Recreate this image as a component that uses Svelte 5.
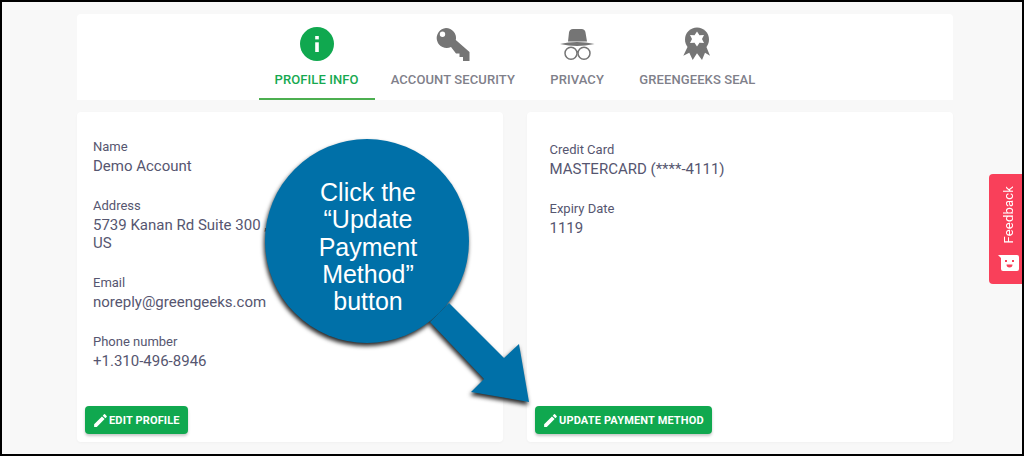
<script>
  const tabs = [
    { label: 'Profile Info', icon: 'info', active: true },
    { label: 'Account Security', icon: 'key' },
    { label: 'Privacy', icon: 'spy' },
    { label: 'GreenGeeks Seal', icon: 'seal' }
  ];
  const profile = [
    { label: 'Name', lines: ['Demo Account'] },
    { label: 'Address', lines: ['5739 Kanan Rd Suite 300 ,', 'US'] },
    { label: 'Email', lines: ['noreply@greengeeks.com'] },
    { label: 'Phone number', lines: ['+1.310-496-8946'] }
  ];
  const billing = [
    { label: 'Credit Card', lines: ['MASTERCARD (****-4111)'] },
    { label: 'Expiry Date', lines: ['1119'] }
  ];
</script>

{#snippet pencil()}
  <svg class="pencil" viewBox="0 0 24 24" aria-hidden="true">
    <path d="M3 17.25V21h3.75L17.81 9.94l-3.75-3.75L3 17.25zM20.71 7.04a1 1 0 0 0 0-1.41l-2.34-2.34a1 1 0 0 0-1.41 0l-1.83 1.83 3.75 3.75 1.83-1.83z" />
  </svg>
{/snippet}

{#snippet fields(items)}
  <div class="fields">
    {#each items as f}
      <div class="field">
        <div class="label">{f.label}</div>
        {#each f.lines as l}<div class="value">{l}</div>{/each}
      </div>
    {/each}
  </div>
{/snippet}

<div class="frame">
  <main class="page">
    <nav class="tabs">
      {#each tabs as t}
        <div class="tab" class:active={t.active}>
          <svg class="tab-icon" viewBox="0 0 36 36" aria-hidden="true">
            {#if t.icon === 'info'}
              <circle cx="18" cy="18" r="17" fill="#10a84f" />
              <rect x="16.2" y="16.3" width="3.6" height="9.700" fill="#fff" />
              <rect x="16.2" y="10" width="3.6" height="3.400" fill="#fff" />
            {:else if t.icon === 'key'}
              <path fill="#757575" fill-rule="evenodd" d="M11 2a10 10 0 0 1 9.800 12L34.500 26v9H28v-4h-3.500v-3.500H21L16 21A10 10 0 1 1 11 2zM7.500 5.500a2.700 2.700 0 1 0 0 5.400 2.700 2.700 0 0 0 0-5.400z" />
            {:else if t.icon === 'spy'}
              <path fill="#757575" d="M9 15.500 10 6.500Q10.500 3 14 3h8.500Q26 3 26.500 6.500L28 15.500z" />
              <path fill="#757575" d="M1 18Q9 16 18 16T35.500 18Q26 20 18 20T1 18z" />
              <g fill="none" stroke="#757575" stroke-width="1.500">
                <circle cx="12" cy="27.300" r="6" />
                <circle cx="25" cy="27.300" r="6" />
                <path d="M17.500 26Q18.500 25.300 19.500 26" />
              </g>
            {:else}
              <path fill="#757575" d="M9 20 4.300 29.700l6-3L13.700 34 18 27.300 23 34l3-7.300 5 3L27 20z" />
              <circle cx="18" cy="13.500" r="12" fill="#757575" />
              <path fill="#fff" d="m18 5.500 2.500 3.700 4.500-.2-2 4 2 4-4.500-.2-2.500 3.700-2.500-3.700-4.500.2 2-4-2-4 4.500.2z" />
            {/if}
          </svg>
          <span class="tab-label">{t.label}</span>
        </div>
      {/each}
    </nav>

    <div class="cards">
      <section class="card">
        {@render fields(profile)}
        <button class="btn">{@render pencil()}Edit Profile</button>
      </section>
      <section class="card billing">
        {@render fields(billing)}
        <button class="btn">{@render pencil()}Update Payment Method</button>
      </section>
    </div>
  </main>

  <aside class="feedback">
    <span class="feedback-text">Feedback</span>
    <svg class="feedback-icon" viewBox="0 0 21 16" aria-hidden="true">
      <path fill="#fff" d="M0 0h19a2 2 0 0 1 2 2v12a2 2 0 0 1-2 2H5a2 2 0 0 1-2-2V3z" />
      <rect x="7" y="5" width="2" height="2" fill="#f9405a" />
      <rect x="14" y="5" width="2" height="2" fill="#f9405a" />
      <path fill="#f9405a" d="M8.500 9.500h6a3 3 0 0 1-6 0z" />
    </svg>
  </aside>

  <div class="callout">
    <svg class="callout-shape" viewBox="0 0 1024 456" aria-hidden="true">
      <path fill="#0070a8" d="M449 303 504 358 519 344 529 402 471 392 484 379 430 322z" />
      <circle cx="367" cy="241" r="102" fill="#0070a8" />
    </svg>
    <p class="callout-text">Click the<br />“Update<br />Payment<br />Method”<br />button</p>
  </div>
</div>

<style>
  :global(body) {
    margin: 0;
    background: #f8f8f8;
  }
  .frame {
    position: relative;
    box-sizing: border-box;
    width: 1024px;
    height: 456px;
    overflow: hidden;
    border: 2px solid #000;
    background: #f8f8f8;
    font-family: Roboto, "Liberation Sans", sans-serif;
  }
  .page {
    display: flex;
    flex-direction: column;
    gap: 12px;
    width: 876px;
    margin-left: 75px;
    padding-top: 12px;
  }
  .tabs {
    display: flex;
    justify-content: center;
    gap: 3.3px;
    height: 86px;
    background: #fff;
    border-radius: 4px 4px 0 0;
  }
  .tab {
    display: flex;
    flex-direction: column;
    align-items: center;
    box-sizing: border-box;
    padding: 12px 16px 0;
    border-bottom: 2px solid transparent;
  }
  .tab.active {
    border-bottom-color: #4caf50;
    margin-right: -3.3px;
  }
  .tab-icon {
    width: 36px;
    height: 36px;
    margin-bottom: 10px;
  }
  .tab-label {
    font-size: 13px;
    line-height: 16px;
    font-weight: 500;
    letter-spacing: 0.1px;
    text-transform: uppercase;
    color: #80808a;
    white-space: nowrap;
  }
  .active .tab-label {
    color: #16a950;
  }
  .cards {
    display: flex;
    justify-content: space-between;
  }
  .card {
    display: flex;
    flex-direction: column;
    box-sizing: border-box;
    width: 426px;
    height: 330px;
    padding: 26px 8px 8px;
    background: #fff;
    border-radius: 4px;
    box-shadow: 0 1px 3px rgba(0, 0, 0, 0.03);
  }
  .card.billing {
    padding-top: 29px;
  }
  .fields {
    display: flex;
    flex-direction: column;
    gap: 22px;
    flex: 1;
    padding: 0 8px;
    min-width: 0;
  }
  .billing .fields {
    padding-left: 14.5px;
  }
  .label {
    font-size: 13px;
    line-height: 18px;
    color: #565670;
  }
  .value {
    font-size: 15px;
    line-height: 18px;
    margin-top: 1px;
    color: #565670;
    white-space: nowrap;
  }
  .value + .value {
    margin-top: 0;
  }
  .btn {
    display: inline-flex;
    align-items: center;
    align-self: flex-start;
    box-sizing: border-box;
    height: 28px;
    padding: 0 8px 0 7px;
    border: 0;
    border-radius: 4px;
    background: #10a84f;
    box-shadow: 0 2px 3px rgba(0, 0, 0, 0.22);
    color: #fff;
    font: 700 11px/1 Roboto, "Liberation Sans", sans-serif;
    letter-spacing: 0.16px;
    text-transform: uppercase;
  }
  .pencil {
    width: 17px;
    height: 17px;
    fill: #fff;
  }
  .feedback {
    position: absolute;
    right: 0;
    top: 172px;
    display: flex;
    flex-direction: column;
    align-items: center;
    justify-content: space-between;
    box-sizing: border-box;
    width: 33px;
    height: 110px;
    padding: 12px 0 13px 6px;
    background: #f9405a;
    border-radius: 4px 0 0 4px;
  }
  .feedback-text {
    writing-mode: vertical-rl;
    transform: rotate(180deg);
    color: #fff;
    font-size: 13px;
    letter-spacing: 0.2px;
  }
  .feedback-icon {
    width: 21px;
    height: 16px;
  }
  .callout {
    position: absolute;
    inset: -2px;
    pointer-events: none;
  }
  .callout-shape {
    position: absolute;
    inset: 0;
    width: 1024px;
    height: 456px;
    filter: drop-shadow(-1px 3px 2px rgba(0, 0, 0, 0.85));
  }
  .callout-text {
    position: absolute;
    left: 266px;
    top: 179px;
    width: 204px;
    margin: 0;
    text-align: center;
    font: 25px/27.300px "Liberation Sans", Arial, sans-serif;
    color: #fff;
  }
</style>
